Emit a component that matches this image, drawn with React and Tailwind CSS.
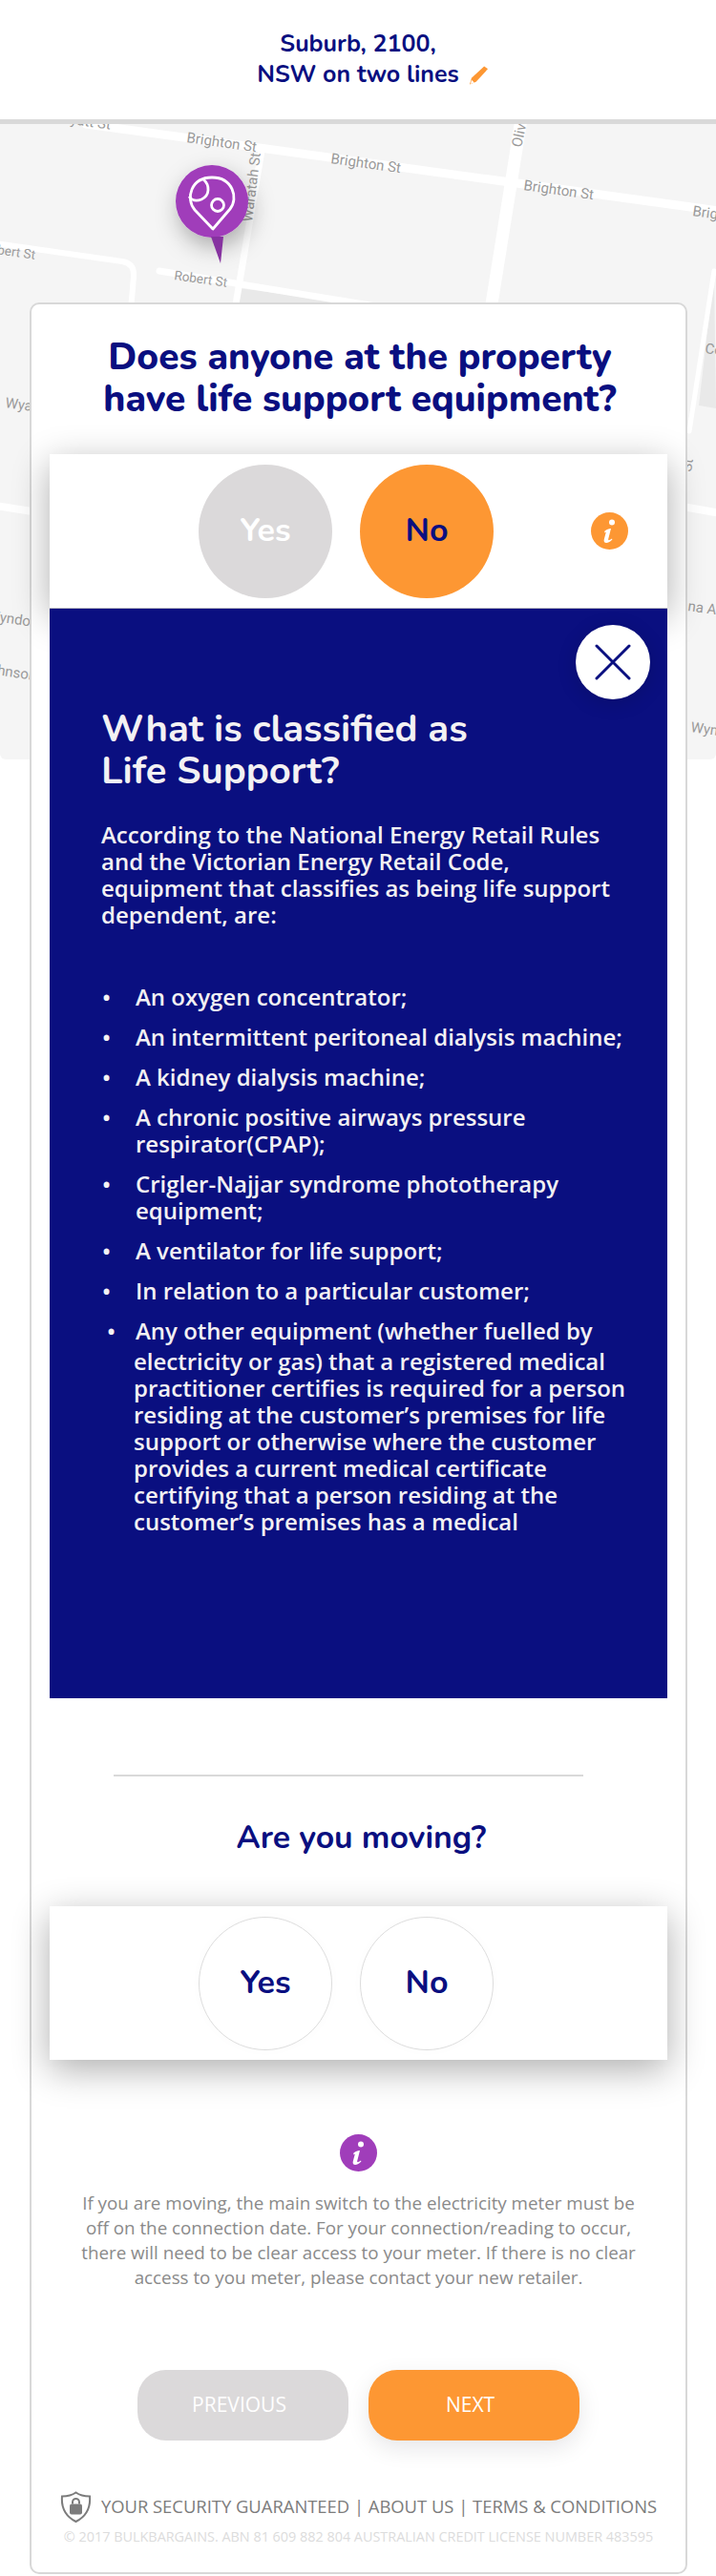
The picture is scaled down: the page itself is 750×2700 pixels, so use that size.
import React from "react";

const headFont = "font-['Nunito','Lato','Liberation_Sans',sans-serif]";

const listItems = [
  ["An oxygen concentrator;"],
  ["An intermittent peritoneal dialysis machine;"],
  ["A kidney dialysis machine;"],
  ["A chronic positive airways pressure", "respirator(CPAP);"],
  ["Crigler-Najjar syndrome phototherapy", "equipment;"],
  ["A ventilator for life support;"],
  ["In relation to a particular customer;"],
];

const lastItem = [
  "electricity or gas) that a registered medical",
  "practitioner certifies is required for a person",
  "residing at the customer’s premises for life",
  "support or otherwise where the customer",
  "provides a current medical certificate",
  "certifying that a person residing at the",
  "customer’s premises has a medical",
];

function InfoIcon({ color }) {
  return (
    <svg width="39" height="39" viewBox="0 0 39 39">
      <circle cx="19.5" cy="19.5" r="19.5" fill={color} />
      <circle cx="22" cy="10.5" r="3" fill="#fff" />
      <path d="M14.5 19.5c2-1.8 4-2.6 6.5-2.6l-2.8 11.2c-.3 1.3.7 1.7 3.8-.6l.4 1c-2.8 2.6-4.5 3.4-6.2 3.4-2.2 0-3-1.2-2.4-3.6l2-7.6c-.6.2-1.2.5-1.7.9z" fill="#fff" />
    </svg>
  );
}

function MapBackground() {
  return (
    <svg className="absolute inset-0" width="750" height="667" viewBox="0 130 750 667" fontFamily="Roboto, sans-serif" fontSize="15" fill="#9a9a9a">
      <path d="M251 302 L364 317 L400 340 L250 340 Z" fill="#e9e9e9" />
      <path d="M748 285 L732 425 L750 428 Z" fill="#e9e9e9" />
      <g stroke="#fff" fill="none" strokeWidth="9" strokeLinecap="round">
        <path d="M90 130 L760 222" />
        <path d="M546 125 L514 325" strokeWidth="13" />
        <path d="M274 158 L246 325" strokeWidth="7" />
        <path d="M-5 255 L128 274 Q141 276 140 290 L137 325" strokeWidth="6" />
        <path d="M167 284 L400 322" strokeWidth="7" />
        <path d="M748 284 L722 452" strokeWidth="5" />
        <path d="M-5 530 L40 537" strokeWidth="8" />
        <path d="M715 531 L755 538" strokeWidth="8" />
      </g>
      <text x="60" y="128" transform="rotate(8 60 128)">Wyatt St</text>
      <text x="195" y="149" transform="rotate(8 195 149)">Brighton St</text>
      <text x="346" y="171" transform="rotate(8 346 171)">Brighton St</text>
      <text x="548" y="199" transform="rotate(8 548 199)">Brighton St</text>
      <text x="725" y="226" transform="rotate(8 725 226)">Brighton St</text>
      <text x="-19" y="264" fontSize="13.5" transform="rotate(8 -19 264)">Robert St</text>
      <text x="182" y="293" fontSize="13.5" transform="rotate(8 182 293)">Robert St</text>
      <text x="264" y="233" transform="rotate(-83 264 233)">Waratah St</text>
      <text x="546" y="155" transform="rotate(-78 546 155)">Oliver</text>
      <text x="738" y="370" transform="rotate(8 738 370)">Cowper</text>
      <text x="724" y="495" transform="rotate(-82 724 495)">St</text>
      <text x="5" y="427" transform="rotate(8 5 427)">Wyatt</text>
      <text x="-14" y="650" transform="rotate(8 -14 650)">Wyndora</text>
      <text x="-20" y="705" transform="rotate(8 -20 705)">Johnson</text>
      <text x="720" y="640" transform="rotate(8 720 640)">na Ave</text>
      <text x="723" y="767" transform="rotate(8 723 767)">Wyndora</text>
    </svg>
  );
}

function MapPin() {
  return (
    <div className="absolute left-[184px] top-[43px] w-[78px] h-[110px]">
      <svg className="absolute left-0 top-0 overflow-visible" width="78" height="110" viewBox="0 0 78 110">
        <defs>
          <filter id="pinShadow" x="-60%" y="-60%" width="220%" height="220%">
            <feDropShadow dx="3" dy="10" stdDeviation="12" floodColor="#000" floodOpacity="0.3" />
          </filter>
        </defs>
        <circle cx="38" cy="38" r="38" fill="#a03dba" filter="url(#pinShadow)" />
        <path d="M37 75 L50 75 L47 103 Z" fill="#8632a0" />
        <path d="M39 67 L20 47 C10 35 16 13 38 13 C60 13 66 35 57 46 Z" fill="none" stroke="#fff" strokeWidth="2.8" strokeLinejoin="round" />
        <path d="M29 15 C36 21 36 32 27 36 C22 38 17 37 14 33" fill="none" stroke="#fff" strokeWidth="2.8" />
        <circle cx="44" cy="42" r="6.5" fill="none" stroke="#fff" strokeWidth="2.8" />
      </svg>
    </div>
  );
}

function YesNo({ selected, children }) {
  const yesClass = selected
    ? "bg-[#dbd9da] text-white"
    : "border border-[#dddddd] text-[#0a0f80] shadow-[0_0_12px_rgba(0,0,0,0.02)]";
  const noClass = selected
    ? "bg-[#fd9733] text-[#0a0f80]"
    : "border border-[#dddddd] text-[#0a0f80] shadow-[0_0_12px_rgba(0,0,0,0.02)]";
  return (
    <div className="relative h-[161px] bg-white flex items-center shadow-[0_10px_36px_rgba(0,0,0,0.32)] pl-[156px] gap-[29px]">
      <div className={`w-[140px] h-[140px] rounded-full flex items-center justify-center text-[34px] font-bold ${headFont} ${yesClass}`}>Yes</div>
      <div className={`w-[140px] h-[140px] rounded-full flex items-center justify-center text-[34px] font-bold ${headFont} ${noClass}`}>No</div>
      {children}
    </div>
  );
}

export default function App() {
  return (
    <div className="relative w-[750px] h-[2700px] bg-white overflow-hidden font-['Open_Sans',sans-serif]">
      <header className={`h-[130px] border-b-[5px] border-[#d9d9d9] pt-[30px] text-center text-[#0a0f80] text-[25px] leading-[32px] font-bold ${headFont}`}>
        <div>Suburb, 2100,</div>
        <div>
          <span className="relative">
            NSW on two lines
            <svg className="absolute left-full top-[8px] ml-[11px]" width="19" height="20" viewBox="0 0 20 20">
              <path d="M16 0 L20 3 L7 17 L0 20 L2 13 Z" fill="#fd9733" />
              <path d="M2 15 L5 18 L1 19.5 Z" fill="#fff" />
            </svg>
          </span>
        </div>
      </header>

      <div className="absolute left-0 top-[130px] w-[750px] h-[666px] bg-[#f5f5f5] rounded-b-md overflow-hidden">
        <MapBackground />
        <MapPin />
      </div>

      <main className="absolute left-[31px] top-[317px] w-[689px] h-[2381px] bg-white border-2 border-[#d8d8d8] rounded-[10px] px-[19px]">
        <h1 className={`pt-[34px] pl-[3px] text-center text-[#0a0f80] text-[38.8px] leading-[44px] font-extrabold whitespace-nowrap ${headFont}`}>
          Does anyone at the property<br />have life support equipment?
        </h1>

        <div className="mt-[35px]">
          <YesNo selected>
            <div className="absolute left-[567px] top-[61px]"><InfoIcon color="#fd9733" /></div>
          </YesNo>
          <div className="relative h-[1143px] bg-[#0a0f80] border-t border-[#b5b5c0] text-[#f3f1f3] pl-[54px] pt-[104px]">
            <button className="absolute right-[18px] top-[17px] w-[78px] h-[78px] rounded-full bg-white flex items-center justify-center shadow-[0_4px_20px_rgba(0,0,0,0.15)]">
              <svg width="38" height="38" viewBox="0 0 38 38" stroke="#0a0f80" strokeWidth="3" strokeLinecap="round">
                <path d="M2 2 L36 36 M36 2 L2 36" />
              </svg>
            </button>
            <h2 className={`text-[40px] leading-[44px] font-bold ${headFont}`}>What is classified as<br />Life Support?</h2>
            <p className="mt-[31px] text-[24px] leading-[28px] font-semibold">
              According to the National Energy Retail Rules<br />
              and the Victorian Energy Retail Code,<br />
              equipment that classifies as being life support<br />
              dependent, are:
            </p>
            <ul className="mt-[58px] text-[24px] leading-[28px] font-semibold flex flex-col gap-[14px]">
              {listItems.map((lines) => (
                <li key={lines[0]} className="flex">
                  <span className="w-[36px] pl-[1px]">•</span>
                  <span>{lines.map((l) => <div key={l}>{l}</div>)}</span>
                </li>
              ))}
              <li>
                <div className="flex">
                  <span className="w-[36px] pl-[6px]">•</span>
                  <span>Any other equipment (whether fuelled by</span>
                </div>
                <div className="pl-[34px] pt-[4px]">
                  {lastItem.map((l) => <div key={l}>{l}</div>)}
                </div>
              </li>
            </ul>
          </div>
        </div>

        <div className="mt-[80px] mx-[67px] w-[492px] h-[2px] bg-[#d9d9d9]" />
        <h2 className={`mt-[42px] pl-[6px] text-center text-[#0a0f80] text-[33.8px] leading-[44px] font-bold ${headFont}`}>Are you moving?</h2>
        <div className="mt-[50px]">
          <YesNo />
        </div>

        <div className="mt-[78px] flex justify-center"><InfoIcon color="#a03dba" /></div>
        <p className="mt-[20px] text-center text-[#8a8a8a] text-[18.8px] leading-[26px]">
          If you are moving, the main switch to the electricity meter must be<br />
          off on the connection date. For your connection/reading to occur,<br />
          there will need to be clear access to your meter. If there is no clear<br />
          access to you meter, please contact your new retailer.
        </p>

        <div className="mt-[84px] flex justify-center gap-[21px]">
          <button className="w-[221px] h-[74px] pr-[8px] rounded-[30px] bg-[#dbd9da] text-white text-[21px] font-medium">PREVIOUS</button>
          <button className="w-[221px] h-[74px] pr-[8px] rounded-[30px] bg-[#fd9733] text-white text-[21px] font-medium shadow-[0_8px_24px_rgba(0,0,30,0.1)]">NEXT</button>
        </div>

        <div className="mt-[52px] flex items-center justify-center gap-[10px] text-[#7c7c7c] text-[18.4px] leading-[34px] whitespace-nowrap">
          <svg width="33" height="33" viewBox="0 0 33 33" className="shrink-0">
            <path d="M16.5 1.5 C20 4 25 5.5 31 5.5 C32 17 28 26 16.5 32 C5 26 1 17 2 5.5 C8 5.5 13 4 16.5 1.5 Z" fill="none" stroke="#7c7c7c" strokeWidth="2" />
            <rect x="10" y="13.5" width="13" height="11" rx="2" fill="#7c7c7c" />
            <path d="M13 13.5 v-2 a3.5 3.5 0 0 1 7 0 v2" fill="none" stroke="#7c7c7c" strokeWidth="2" />
          </svg>
          <span>YOUR SECURITY GUARANTEED | ABOUT US | TERMS &amp; CONDITIONS</span>
        </div>
        <p className="mt-[3px] text-center text-[#dcdcdc] text-[14.4px] leading-[24px] whitespace-nowrap">
          © 2017 BULKBARGAINS. ABN 81 609 882 804 AUSTRALIAN CREDIT LICENSE NUMBER 483595
        </p>
      </main>
    </div>
  );
}
